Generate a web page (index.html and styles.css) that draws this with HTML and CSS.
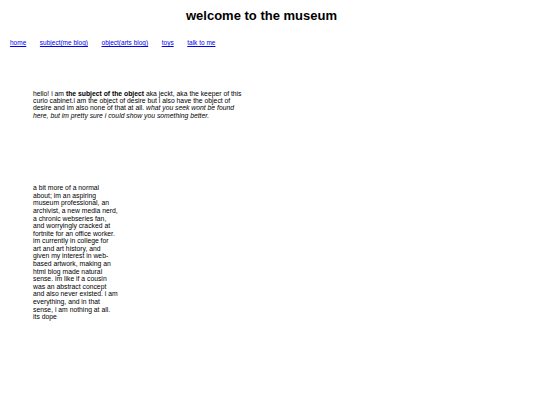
FILE: index.html
```html
<!DOCTYPE html>
<html>
<head>
<meta charset="utf-8">
<link rel="stylesheet" href="styles.css">
<title>welcome to the museum</title>
</head>
<body>
<h1 class="title">welcome to the museum</h1>
<nav class="nav">
  <a href="#">home</a>
  <a href="#">subject(me blog)</a>
  <a href="#">object(arts blog)</a>
  <a href="#">toys</a>
  <a href="#">talk to me</a>
</nav>
<main class="content">
  <p class="intro">hello! i am <b>the subject of the object</b> aka jeckt, aka the keeper of this curio cabinet.i am the object of desire but i also have the object of desire and im also none of that at all. <i>what you seek wont be found here, but im pretty sure i could show you something better.</i></p>
  <p class="about">a bit more of a normal about; im an aspiring museum professional, an archivist, a new media nerd, a chronic webseries fan, and worryingly cracked at fortnite for an office worker. im currently in college for art and art history, and given my interest in web-based artwork, making an html blog made natural sense. im like if a cousin was an abstract concept and also never existed. i am everything, and in that sense, i am nothing at all. its dope</p>
</main>
</body>
</html>
```
FILE: styles.css
```css
html, body {
  margin: 0;
  padding: 0;
  background: #ffffff;
}
body {
  font-family: "Liberation Sans", Arial, sans-serif;
  font-size: 6.5px;
  color: #000;
}
.title {
  margin: 0;
  padding: 8px 17px 0 0;
  font-size: 13px;
  line-height: 16px;
  text-align: center;
  font-weight: bold;
}
.nav {
  display: flex;
  gap: 13.6px;
  padding-left: 10px;
  margin-top: 15px;
  line-height: 7.5px;
}
.nav a {
  color: #0000ee;
  text-decoration: underline;
}
.content {
  padding-left: 33px;
  font-size: 6.8px;
}
.intro {
  width: 212px;
  margin: 43px 0 0 0;
  line-height: 7.4px;
}
.about {
  width: 85px;
  margin: 65px 0 0 0;
  line-height: 7.6px;
}
```
